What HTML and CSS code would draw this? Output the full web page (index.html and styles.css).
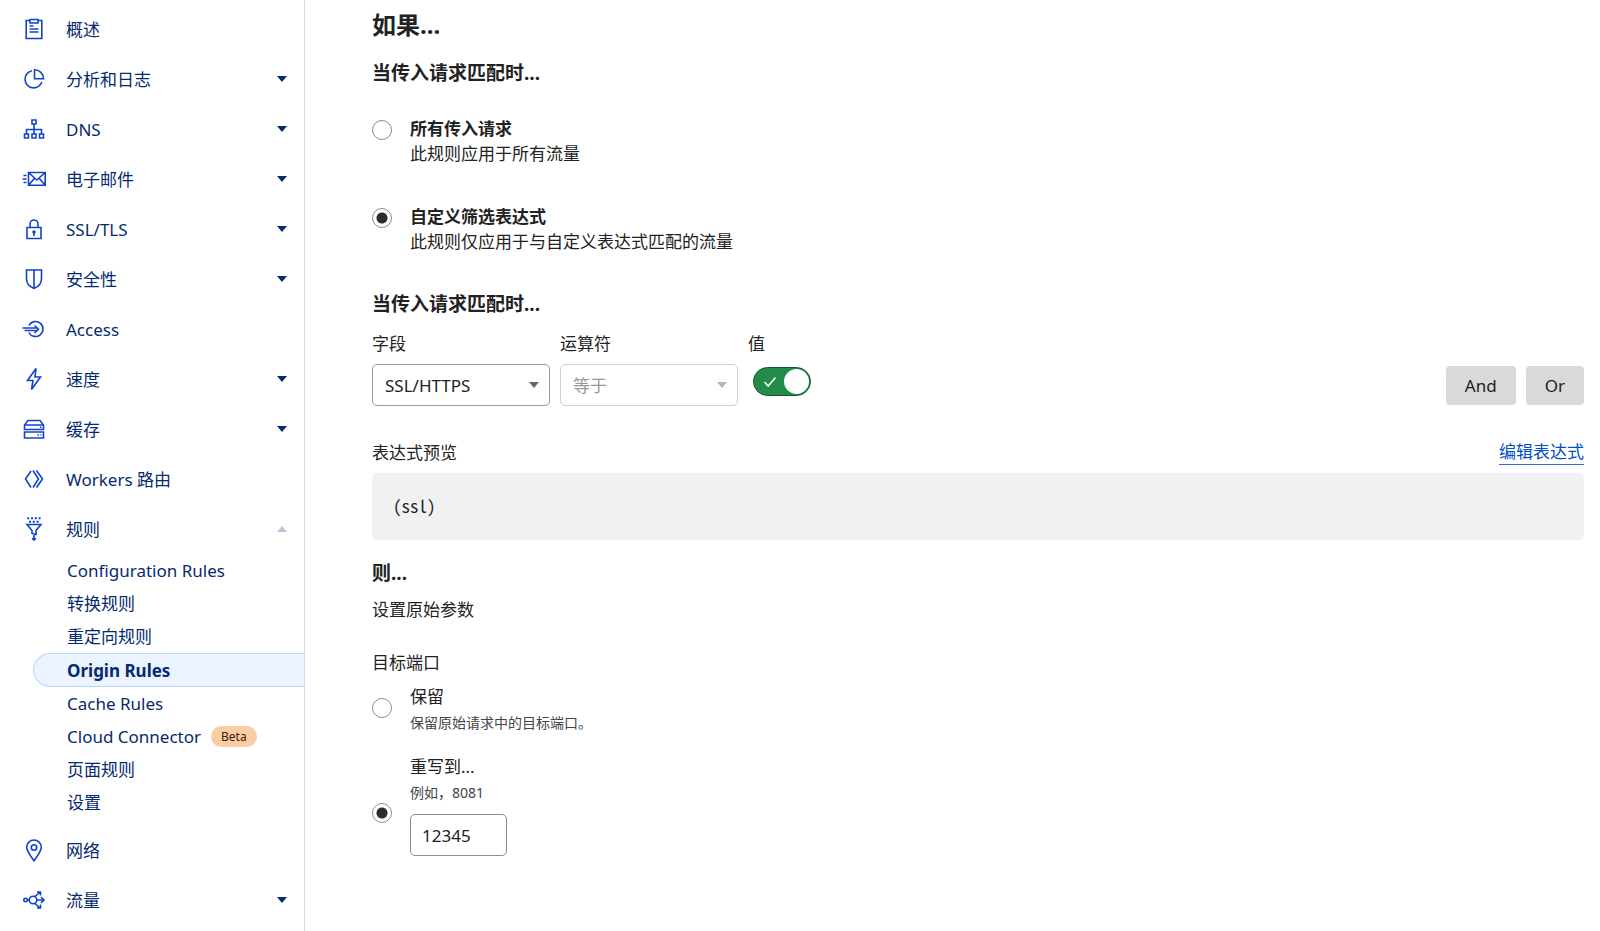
FILE: index.html
```html
<!DOCTYPE html>
<html lang="zh-CN">
<head>
<meta charset="utf-8">
<meta name="viewport" content="width=device-width, initial-scale=1">
<title>Origin Rules</title>
<link rel="stylesheet" href="styles.css">
</head>
<body>
<div class="layout">
  <nav class="sidebar">
    <ul class="nav">
      <li><a class="nav-item" href="#">
        <svg class="icon" viewBox="0 0 24 24"><path d="M8 3.500H4.200v18h15.600v-18H16M8 2.500h8V6H8zM7.500 9h4M7.500 12h9M7.500 15h9"/></svg>
        <span class="nav-label">概述</span></a></li>
      <li><a class="nav-item" href="#">
        <svg class="icon" viewBox="0 0 24 24"><path d="M10 3.800A8.600 8.600 0 1 0 19.800 15M12.500 2.800v9h9A9 9 0 0 0 12.500 2.800z"/></svg>
        <span class="nav-label">分析和日志</span><i class="caret"></i></a></li>
      <li><a class="nav-item" href="#">
        <svg class="icon" viewBox="0 0 24 24"><path d="M10 3h4v4h-4zM12 7v10M4.500 17v-4.500h15V17M2.500 17h4v4h-4zM10 17h4v4h-4zM17.500 17h4v4h-4z"/></svg>
        <span class="nav-label">DNS</span><i class="caret"></i></a></li>
      <li><a class="nav-item" href="#">
        <svg class="icon" viewBox="0 0 24 24"><path d="M6.500 5.500h16.700v12.700H6.500zM6.500 5.500l8.300 7.500 8.400-7.500M6.500 18.200l6-7M23.200 18.200l-6-7M1.500 8.500h3M.5 12h4M1.500 15.500h3"/></svg>
        <span class="nav-label">电子邮件</span><i class="caret"></i></a></li>
      <li><a class="nav-item" href="#">
        <svg class="icon" viewBox="0 0 24 24"><path d="M5 10.500h14v11H5zM8 10.500V7a4 4 0 0 1 8 0v3.500M12 15v4"/><circle cx="12" cy="15" r="1"/></svg>
        <span class="nav-label">SSL/TLS</span><i class="caret"></i></a></li>
      <li><a class="nav-item" href="#">
        <svg class="icon" viewBox="0 0 24 24"><path d="M4.500 3h15v8.500c0 5-3.500 8.500-7.500 10-4-1.500-7.500-5-7.500-10zM12 3v18.500"/></svg>
        <span class="nav-label">安全性</span><i class="caret"></i></a></li>
      <li><a class="nav-item" href="#">
        <svg class="icon" viewBox="0 0 24 24"><path d="M6.800 8.500a7.500 7.500 0 1 1 0 7M.5 11h14M2.500 13.500h12M12.500 8.500l4 3.700-4 3.800"/></svg>
        <span class="nav-label">Access</span></a></li>
      <li><a class="nav-item" href="#">
        <svg class="icon" viewBox="0 0 24 24"><path d="M14 1.500L5.500 13.500H11L9.500 22.500l9-12.500H13z"/></svg>
        <span class="nav-label">速度</span><i class="caret"></i></a></li>
      <li><a class="nav-item" href="#">
        <svg class="icon" viewBox="0 0 24 24"><path d="M2.500 8L6 3.500h12L21.500 8v4.500h-19zM2.500 8h19M2.500 15h19v6h-19zM18 10.300h1.500M15.500 18h1.500M18.500 18h1"/></svg>
        <span class="nav-label">缓存</span><i class="caret"></i></a></li>
      <li><a class="nav-item" href="#">
        <svg class="icon" viewBox="0 0 24 24"><path d="M9 4L3.500 12 9 20.500M11 3.500l5.500 8.500-5.500 8.500M14.500 3.500L20.500 12l-6 8.500"/></svg>
        <span class="nav-label">Workers 路由</span></a></li>
      <li><a class="nav-item" href="#">
        <svg class="icon" viewBox="0 0 24 24"><path stroke-width="2" stroke-dasharray="2 1.800" d="M5.200 1.200h14M7 4.800h10"/><path d="M5 7.500h14l-5 6v4l-4-1v-3zM12 18v5M10 21.300l2 1.700 2-1.700"/></svg>
        <span class="nav-label">规则</span><i class="caret caret-open"></i></a>
        <ul class="subnav">
          <li><a href="#">Configuration Rules</a></li>
          <li><a href="#">转换规则</a></li>
          <li><a href="#">重定向规则</a></li>
          <li><a class="active" href="#">Origin Rules</a></li>
          <li><a href="#">Cache Rules</a></li>
          <li><a href="#">Cloud Connector<span class="badge">Beta</span></a></li>
          <li><a href="#">页面规则</a></li>
          <li><a href="#">设置</a></li>
        </ul></li>
      <li><a class="nav-item" href="#">
        <svg class="icon" viewBox="0 0 24 24"><path d="M12 22.800C8 17.500 4.700 13 4.700 9.300a7.300 7.300 0 0 1 14.600 0C19.300 13 16 17.500 12 22.800z"/><circle cx="12" cy="9.500" r="2.700"/></svg>
        <span class="nav-label">网络</span></a></li>
      <li><a class="nav-item" href="#">
        <svg class="icon" viewBox="0 0 24 24"><circle cx="3.500" cy="12" r="1.700"/><circle cx="11" cy="12" r="3.800"/><path d="M5.200 12h2M13 8.500l5-4.500M15 4h3.500v3.500M13 15.500l5 4.500M15 20h3.500v-3.500M14.800 12h7M19 9l3 3-3 3"/></svg>
        <span class="nav-label">流量</span><i class="caret"></i></a></li>
    </ul>
  </nav>

  <main class="content">
    <form>
      <h2 class="title">如果...</h2>
      <h3 class="subtitle">当传入请求匹配时...</h3>
      <div class="match-options">
        <div class="option">
          <input class="radio" type="radio" name="match" id="match-all">
          <label for="match-all"><strong>所有传入请求</strong><span>此规则应用于所有流量</span></label>
        </div>
        <div class="option">
          <input class="radio" type="radio" name="match" id="match-custom" checked>
          <label for="match-custom"><strong>自定义筛选表达式</strong><span>此规则仅应用于与自定义表达式匹配的流量</span></label>
        </div>
      </div>

      <h3 class="subtitle">当传入请求匹配时...</h3>
      <div class="builder">
        <div class="field">
          <label for="field">字段</label>
          <div class="select-wrap"><select id="field"><option>SSL/HTTPS</option></select></div>
        </div>
        <div class="field">
          <label for="operator">运算符</label>
          <div class="select-wrap disabled"><select id="operator" disabled><option>等于</option></select></div>
        </div>
        <div class="field field-value">
          <label for="value">值</label>
          <div class="switch">
            <input type="checkbox" role="switch" id="value" checked>
            <svg class="check" viewBox="0 0 14 12"><path d="M1.500 6l3.700 4L12.500 1.500"/></svg>
          </div>
        </div>
        <div class="logic">
          <button type="button">And</button>
          <button type="button">Or</button>
        </div>
      </div>

      <div class="preview-head"><span>表达式预览</span><a href="#">编辑表达式</a></div>
      <pre class="preview">(ssl)</pre>

      <h3 class="subtitle">则...</h3>
      <p class="lead">设置原始参数</p>

      <fieldset class="port">
        <legend>目标端口</legend>
        <div class="port-option">
          <input class="radio" type="radio" name="port" id="port-keep">
          <label for="port-keep"><span>保留</span><small>保留原始请求中的目标端口。</small></label>
        </div>
        <div class="port-option port-rewrite">
          <input class="radio" type="radio" name="port" id="port-rewrite" checked>
          <div>
            <label for="port-rewrite"><span>重写到...</span><small>例如，8081</small></label>
            <input class="text" type="text" value="12345" aria-label="重写到">
          </div>
        </div>
      </fieldset>
    </form>
  </main>
</div>
</body>
</html>
```

FILE: styles.css
```css
* { box-sizing: border-box; }

body {
  margin: 0;
  background: #fff;
  color: #222;
  font: 17px/25px "Noto Sans", "Noto Sans CJK SC", sans-serif;
}

input, select, button { font: inherit; color: inherit; margin: 0; }
ul { list-style: none; margin: 0; padding: 0; }
h2, h3, p, pre { margin: 0; }

.layout { display: flex; min-height: 100vh; }

/* Sidebar */
.sidebar {
  flex: none;
  width: 305px;
  padding-top: 4px;
  border-right: 1px solid #d9d9d9;
}
.sidebar a { color: #062a6f; text-decoration: none; }
.nav-item {
  display: flex;
  align-items: center;
  height: 50px;
  padding: 0 17px 0 22px;
}
.icon {
  width: 24px;
  height: 24px;
  margin-right: 20px;
  fill: none;
  stroke: #1044c8;
  stroke-width: 1.6;
  overflow: visible;
}
.nav-label { flex: 1; }
.caret {
  border: 5px solid transparent;
  border-top: 6px solid #062a6f;
  border-bottom: 0;
}
.caret-open {
  border-top: 0;
  border-bottom: 6px solid #b9c6d8;
}
.subnav { padding: 0 0 6px 33px; }
.subnav a {
  display: flex;
  align-items: center;
  height: 33px;
  padding-left: 34px;
}
.subnav .active {
  height: 34px;
  padding-left: 33px;
  border: 1px solid #b9d6ff;
  border-right: 0;
  border-radius: 17px 0 0 17px;
  background: #ebf3fe;
  font-weight: 700;
}
.badge {
  margin-left: 10px;
  padding: 0 10px;
  border-radius: 11px;
  background: #fbcda5;
  color: #40210a;
  font-size: 12px;
  line-height: 21px;
}

/* Rule form */
.content { flex: 1; padding: 7px 16px 32px 67px; }
.title { font-size: 24px; line-height: 36px; }
.subtitle { margin-top: 16px; font-size: 19px; line-height: 28px; }

.radio {
  appearance: none;
  flex: none;
  width: 20px;
  height: 20px;
  border: 1px solid #8c8c8c;
  border-radius: 50%;
  background: #fff;
}
.radio:checked {
  background: radial-gradient(circle, #2c2c2c 5px, #fff 6px);
}
.match-options {
  display: grid;
  gap: 38px;
  margin: 29px 0 36px;
}
.option { display: flex; gap: 18px; }
.option .radio { margin-top: 4px; }
.option label { display: grid; }

.builder { display: flex; gap: 10px; margin-top: 13px; }
.field { width: 178px; }
.field label { display: block; margin-bottom: 8px; }
.select-wrap { position: relative; }
.select-wrap::after {
  content: "";
  position: absolute;
  top: 18px;
  right: 11px;
  border: 5px solid transparent;
  border-top: 6px solid #62676a;
  border-bottom: 0;
  pointer-events: none;
}
.select-wrap select {
  appearance: none;
  width: 100%;
  height: 42px;
  padding: 0 12px;
  border: 1px solid #999;
  border-radius: 5px;
  background: #fff;
}
.disabled select { border-color: #d0d0d0; color: #999; opacity: 1; }
.disabled::after { border-top-color: #b5b8ba; }

.field-value { width: auto; }
.switch { position: relative; width: 58px; margin: 11px 0 0 5px; }
.switch input {
  appearance: none;
  display: flex;
  align-items: center;
  justify-content: flex-end;
  width: 58px;
  height: 29px;
  padding: 0 1px;
  border: 1px solid #14592d;
  border-radius: 15px;
  background: #228b49;
}
.switch input::before {
  content: "";
  width: 25px;
  height: 25px;
  border-radius: 50%;
  background: #fff;
}
.check {
  position: absolute;
  top: 9px;
  left: 10px;
  width: 14px;
  height: 12px;
  fill: none;
  stroke: #fff;
  stroke-width: 1.5;
  pointer-events: none;
}
.logic {
  display: flex;
  align-items: flex-end;
  gap: 10px;
  margin-left: auto;
  padding-bottom: 1px;
}
.logic button {
  height: 39px;
  padding: 0 19px;
  border: 0;
  border-radius: 4px;
  background: #d9d9d9;
}

.preview-head {
  display: flex;
  justify-content: space-between;
  align-items: flex-start;
  margin-top: 34px;
}
.preview-head a {
  color: #0051c3;
  line-height: 24px;
  text-decoration: none;
  border-bottom: 1px solid #2f72d6;
}
.preview {
  margin-top: 8px;
  padding: 20px 21px 22px;
  border-radius: 5px;
  background: #f1f1f1;
  font: 17px/25px "Noto Sans Mono CJK SC", "Liberation Mono", monospace;
}
.preview + .subtitle { margin-top: 19px; }
.lead { margin-top: 10px; }

.port { margin: 28px 0 0; padding: 0; border: 0; min-width: 0; }
.port legend { padding: 0; }
.port-option {
  display: flex;
  align-items: flex-start;
  gap: 18px;
  margin-top: 9px;
}
.port-option .radio { margin-top: 14px; }
.port-option + .port-option { margin-top: 18px; }
.port-rewrite .radio { margin-top: 49px; }
.port-option label { display: grid; }
.port-option small { font-size: 14px; line-height: 27px; color: #444; }
.text {
  display: block;
  width: 97px;
  height: 42px;
  margin-top: 8px;
  padding: 0 11px;
  border: 1px solid #8c8c8c;
  border-radius: 5px;
}
```
